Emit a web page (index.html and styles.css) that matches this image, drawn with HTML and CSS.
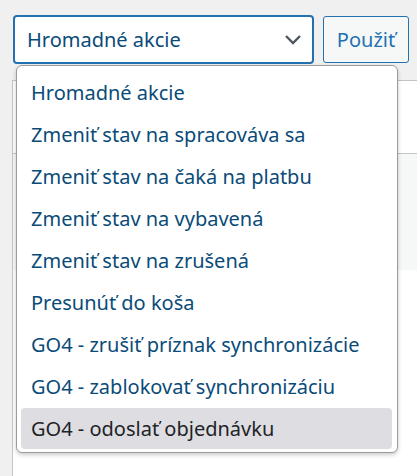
FILE: index.html
```html
<!DOCTYPE html>
<html lang="sk">
<head>
<meta charset="utf-8">
<link rel="stylesheet" href="styles.css">
</head>
<body>
<div class="toolbar">
  <div class="select">
    <span class="select-label">Hromadné akcie</span>
    <svg class="chevron" width="18" height="12" viewBox="0 0 18 12"><polyline points="2,2 9,9 16,2" fill="none" stroke="#50575e" stroke-width="2.4"/></svg>
  </div>
  <div class="button">Použiť</div>
</div>
<div class="table">
  <div class="row-head"></div>
  <div class="row-alt"></div>
  <div class="row"></div>
</div>
<ul class="menu">
  <li class="item">Hromadné akcie</li>
  <li class="item">Zmeniť stav na spracováva sa</li>
  <li class="item">Zmeniť stav na čaká na platbu</li>
  <li class="item">Zmeniť stav na vybavená</li>
  <li class="item">Zmeniť stav na zrušená</li>
  <li class="item">Presunúť do koša</li>
  <li class="item">GO4 - zrušiť príznak synchronizácie</li>
  <li class="item">GO4 - zablokovať synchronizáciu</li>
  <li class="item active">GO4 - odoslať objednávku</li>
</ul>
</body>
</html>
```
FILE: styles.css
```css
html, body {
  margin: 0;
  padding: 0;
  background: #f0f0f1;
  font-family: "Noto Sans", "Open Sans", sans-serif;
  overflow: hidden;
}
body {
  width: 417px;
  height: 476px;
  position: relative;
}
.toolbar {
  display: flex;
  align-items: flex-start;
  padding: 15px 0 0 13px;
  gap: 9px;
  height: 65px;
  box-sizing: border-box;
}
.select {
  width: 301px;
  height: 49px;
  box-sizing: border-box;
  border: 2px solid #2271b1;
  border-radius: 4px;
  background: #fff;
  display: flex;
  align-items: center;
  justify-content: space-between;
  padding: 0 10px 0 12px;
  color: #0a4b78;
  font-size: 20px;
}
.select-label {
  margin-top: -1px;
}
.chevron {
  display: block;
}
.button {
  width: 86px;
  height: 47px;
  margin-top: 1px;
  box-sizing: border-box;
  border: 1px solid #2271b1;
  border-radius: 3px;
  background: #f6f7f7;
  color: #2271b1;
  font-size: 20px;
  display: flex;
  align-items: center;
  justify-content: center;
}
.table {
  margin: 15px 0 0 12px;
  border-left: 1px solid #c3c4c7;
  border-top: 1px solid #c3c4c7;
  background: #fff;
  height: 400px;
}
.row-head {
  height: 72px;
  border-bottom: 1px solid #c3c4c7;
}
.row-alt {
  height: 116px;
  background: #f6f7f7;
}
.menu {
  position: absolute;
  left: 16px;
  top: 65px;
  width: 382px;
  height: 388px;
  box-sizing: border-box;
  margin: 0;
  padding: 6px 5px 4px 4px;
  list-style: none;
  background: #fff;
  border: 1px solid #9b9b9b;
  border-radius: 6px;
  box-shadow: 0 2px 4px rgba(0, 0, 0, 0.2);
}
.item {
  height: 42px;
  line-height: 42px;
  padding-left: 10px;
  font-size: 20px;
  color: #0a4b78;
  white-space: nowrap;
  border-radius: 4px;
}
.item.active {
  height: 41px;
  line-height: 41px;
  background: #dddde2;
  color: #1d2327;
}
```
